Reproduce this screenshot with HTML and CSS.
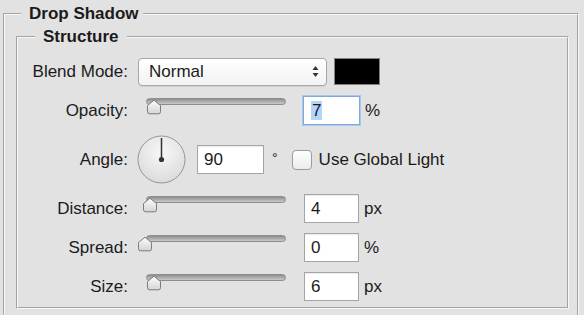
FILE: index.html
```html
<!DOCTYPE html>
<html lang="en">
<head>
  <meta charset="UTF-8" />
  <title>Drop Shadow</title>
  <link rel="stylesheet" href="styles.css">
</head>
<body>

<fieldset class="group">
  <legend class="group-title">Drop Shadow</legend>

  <fieldset class="section">
    <legend class="section-title">Structure</legend>

    <!-- blend mode + colour -->
    <div class="row">
      <span class="field-label">Blend Mode:</span>
      <div class="select">
        <span>Normal</span>
        <svg class="select-arrows" width="7" height="13" viewBox="0 0 7 13">
          <path d="M0.5 5 L3.5 1 L6.5 5 Z M0.5 8 L3.5 12 L6.5 8 Z" fill="#333"/>
        </svg>
      </div>
      <span class="swatch"></span>
    </div>

    <div class="row">
      <span class="field-label">Opacity:</span>
      <div class="slider">
        <svg class="thumb" style="left: 0px" width="16" height="16" viewBox="0 0 16 16"><use href="#thumb"/></svg>
      </div>
      <div class="num focused"><span class="selected">7</span></div>
      <span class="unit">%</span>
    </div>

    <div class="row row-angle">
      <span class="field-label">Angle:</span>
      <svg class="dial" width="49" height="49" viewBox="0 0 49 49">
        <defs>
          <radialGradient id="dialFill" cx="0.5" cy="0.35" r="0.7">
            <stop offset="0" stop-color="#f8f8f8"/>
            <stop offset="1" stop-color="#d9d9d9"/>
          </radialGradient>
        </defs>
        <circle cx="24.5" cy="24.5" r="23.5" fill="url(#dialFill)" stroke="#959595"/>
        <line x1="24.5" y1="24.5" x2="24.5" y2="3" stroke="#333" stroke-width="1.5"/>
        <circle cx="24.5" cy="24.5" r="2.6" fill="#333"/>
      </svg>
      <div class="num num-wide">90</div>
      <span class="degree">°</span>
      <span class="checkbox"></span>
      <span class="check-label">Use Global Light</span>
    </div>

    <div class="row">
      <span class="field-label">Distance:</span>
      <div class="slider">
        <svg class="thumb" style="left: -4px" width="16" height="16" viewBox="0 0 16 16"><use href="#thumb"/></svg>
      </div>
      <div class="num">4</div>
      <span class="unit">px</span>
    </div>

    <div class="row">
      <span class="field-label">Spread:</span>
      <div class="slider">
        <svg class="thumb" style="left: -9px" width="16" height="16" viewBox="0 0 16 16"><use href="#thumb"/></svg>
      </div>
      <div class="num">0</div>
      <span class="unit">%</span>
    </div>

    <div class="row">
      <span class="field-label">Size:</span>
      <div class="slider">
        <svg class="thumb" style="left: 0px" width="16" height="16" viewBox="0 0 16 16"><use href="#thumb"/></svg>
      </div>
      <div class="num">6</div>
      <span class="unit">px</span>
    </div>

  </fieldset>
</fieldset>

<!-- shared slider thumb -->
<svg width="0" height="0" class="defs">
  <defs>
    <linearGradient id="thumbFill" x1="0" y1="0" x2="0" y2="1">
      <stop offset="0" stop-color="#fdfdfd"/>
      <stop offset="1" stop-color="#d4d4d4"/>
    </linearGradient>
    <path id="thumb" d="M1.5 6.5 L8 1.2 L14.5 6.5 V12.8 Q14.5 14.8 12.5 14.8 H3.5 Q1.5 14.8 1.5 12.8 Z" fill="url(#thumbFill)" stroke="#7c7c7c"/>
  </defs>
</svg>

</body>
</html>
```

FILE: styles.css
```css
body {
  margin: 0;
  background-color: #e2e2e2;
  font-family: "Liberation Sans", Arial, sans-serif;
  font-size: 17px;
  color: #1b1b1b;
  overflow: hidden;
}

.group {
  margin: 3px 5px 0 3px;
  padding: 0 0 30px;
  border: 2px groove #f8f8f8;
  min-width: 0;
}

.group-title {
  margin-left: 16px;
  padding: 0 4px 0 8px;
  font-weight: bold;
  line-height: 22px;
}

.section {
  margin: 1px 8px 0 11px;
  padding: 9px 0 6px;
  border: 2px groove #f8f8f8;
  min-width: 0;
}

.section-title {
  margin-left: 17px;
  padding: 0 8px;
  font-weight: bold;
  line-height: 22px;
}

.row {
  display: flex;
  align-items: center;
  height: 29px;
  margin-bottom: 10px;
}

.row:last-of-type {
  margin-bottom: 0;
}

.row-angle {
  height: 49px;
}

.field-label {
  width: 110px;
  flex: none;
  text-align: right;
}

.select {
  display: flex;
  align-items: center;
  margin-left: 10px;
  width: 189px;
  height: 28px;
  box-sizing: border-box;
  padding: 0 7px 0 10px;
  border: 1px solid #a7a7a7;
  border-radius: 4px;
  background: linear-gradient(#ffffff, #f3f3f3);
  box-shadow: 0 1px 1px rgba(0,0,0,0.08);
}

.select-arrows {
  margin-left: auto;
}

.swatch {
  margin-left: 7px;
  width: 46px;
  height: 27px;
  box-sizing: border-box;
  background: #000;
  border: 1px solid #808080;
}

.slider {
  position: relative;
  align-self: flex-start;
  margin-left: 18px;
  width: 140px;
  height: 29px;
  flex: none;
}

.slider::before {
  content: "";
  position: absolute;
  left: 0;
  right: 0;
  top: 2px;
  height: 7px;
  box-sizing: border-box;
  border: 1px solid #8c8c8c;
  border-radius: 4px;
  background: linear-gradient(#8e8e8e, #c9c9c9);
}

.thumb {
  position: absolute;
  top: 3px;
}

.num {
  margin-left: 18px;
  width: 55px;
  height: 29px;
  box-sizing: border-box;
  padding-left: 6px;
  line-height: 27px;
  background: #fff;
  border: 1px solid #a5a5a5;
  box-shadow: inset 0 1px 1px rgba(0,0,0,0.08);
}

.num.focused {
  margin-left: 17px;
  width: 57px;
  padding-left: 7px;
  border-color: #7fa9dd;
  box-shadow: 0 0 0 1px #a9c8ee;
}

.selected {
  display: inline-block;
  line-height: 19px;
  padding: 0 1px;
  background: #b4d4fb;
}

.num-wide {
  margin-left: 11px;
  width: 67px;
}

.dial {
  margin-left: 9px;
  flex: none;
}

.unit {
  margin-left: 5px;
}

.degree {
  margin-left: 8px;
  margin-top: -4px;
  font-size: 14px;
}

.checkbox {
  margin-left: 14px;
  width: 20px;
  height: 20px;
  box-sizing: border-box;
  border: 1px solid #9b9b9b;
  border-radius: 4px;
  background: linear-gradient(#ffffff, #ececec);
}

.check-label {
  margin-left: 7px;
}

.defs {
  position: absolute;
}
```
